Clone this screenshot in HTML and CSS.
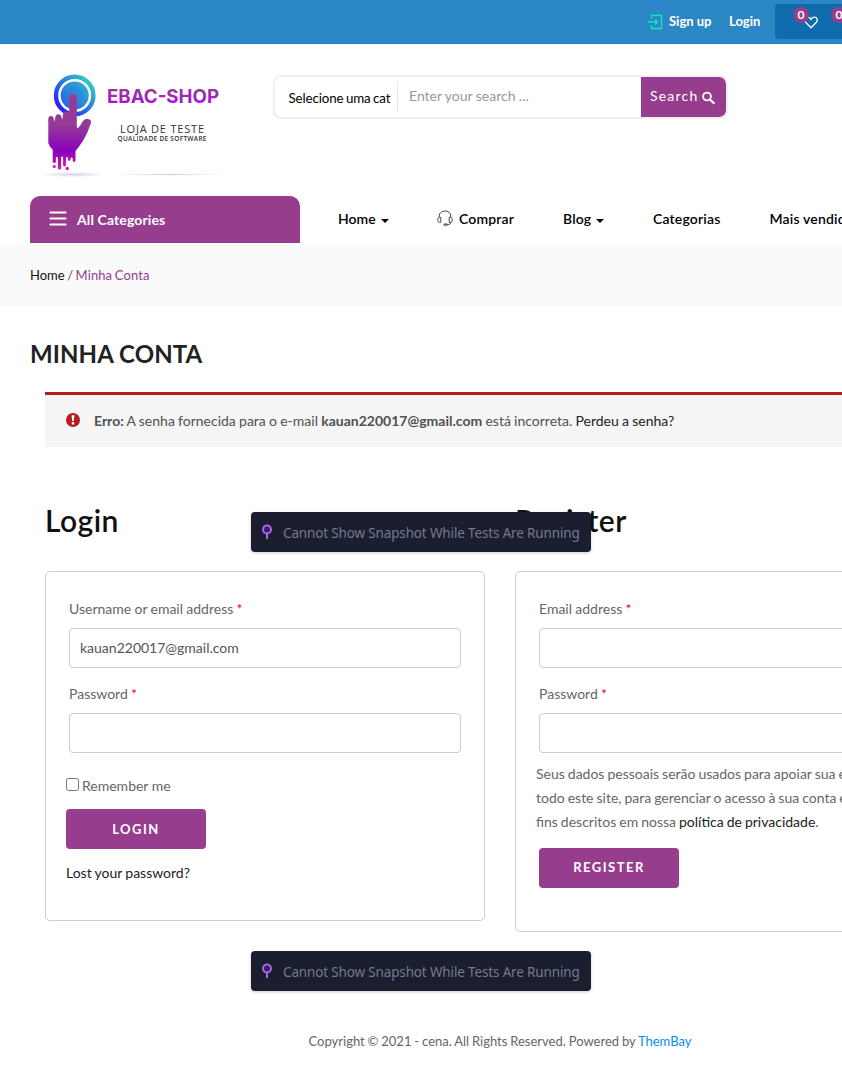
FILE: index.html
```html
<!DOCTYPE html>
<html lang="pt-BR">
<head>
<meta charset="utf-8">
<title>Minha Conta – EBAC-SHOP</title>
<link rel="stylesheet" href="styles.css">
</head>
<body>
<div class="viewport">
<div class="page">
  <div class="topbar">
    <a class="signup">
      <svg width="16" height="16" viewBox="0 0 16 16" fill="none" stroke="#14e6b8" stroke-width="1.300"><path d="M4.500 5V1.500h10v13h-10V11M0.500 8h10M8 5.500 10.500 8 8 10.500"/></svg>
      <span class="t-signup">Sign up</span>
    </a>
    <a class="t-login">Login</a>
    <div class="tools">
      <span class="badge badge-wish">0</span>
      <svg class="heart" width="14" height="13" viewBox="0 0 14 13" fill="none" stroke="#fff" stroke-width="1.300"><path d="M7 11.800 1.800 6.500C-.3 4.200 1 1.200 3.700 1.200 5.300 1.200 6.400 2.200 7 3.400 7.600 2.200 8.700 1.200 10.300 1.200c2.700 0 4 3 1.900 5.300Z"/></svg>
      <span class="badge badge-cart">0</span>
    </div>
  </div>

  <header class="header">
    <svg class="logo" width="210" height="130" viewBox="20 60 210 130">
      <defs>
        <linearGradient id="ring" x1="0" y1="1" x2="1" y2="0"><stop offset="0" stop-color="#2d00ff"/><stop offset=".5" stop-color="#2877e8"/><stop offset="1" stop-color="#38e0b8"/></linearGradient>
        <linearGradient id="disc" x1="0" y1="1" x2="1" y2="0"><stop offset="0" stop-color="#2858e8"/><stop offset="1" stop-color="#30b8cc"/></linearGradient>
        <linearGradient id="hand" x1="0" y1="94" x2="0" y2="170" gradientUnits="userSpaceOnUse"><stop offset="0" stop-color="#963d8e"/><stop offset=".4" stop-color="#963a96"/><stop offset=".75" stop-color="#8a00bd"/><stop offset="1" stop-color="#e016b4"/></linearGradient>
        <linearGradient id="word" x1="0" y1="88" x2="0" y2="104" gradientUnits="userSpaceOnUse"><stop offset="0" stop-color="#963d8e"/><stop offset="1" stop-color="#aa10e0"/></linearGradient>
        <radialGradient id="shade"><stop offset="0" stop-color="#8c8cc8" stop-opacity=".4"/><stop offset="1" stop-color="#8c8cc8" stop-opacity="0"/></radialGradient>
      </defs>
      <ellipse cx="73" cy="174.500" rx="33" ry="2.600" fill="url(#shade)"/>
      <ellipse cx="170" cy="174.500" rx="57" ry="1.200" fill="url(#shade)"/>
      <circle cx="74.700" cy="95.500" r="18.700" fill="#fff" stroke="url(#ring)" stroke-width="4.400"/>
      <circle cx="74.700" cy="95.500" r="14" fill="url(#disc)"/>
      <circle cx="75" cy="95.500" r="9" fill="#2888dc" opacity=".5"/>
      <path fill="url(#hand)" d="M48.300 143V119q0-3 2.600-3t2.900 3q.2 2 .7 2 .6 0 .6-2.500q.4-4.200 3.200-4.200t3.200 3q.2 2 .7 2 .5 0 .6-3.500.3-4.300 3.200-4.300t3.200 2.500V98q0-4 3.800-4t3.800 4V126.500q0 2.500 2 .8 1.500-1.500 3.200-4.800 2.500-4 5.800-3.600 4.600.6 2.800 5Q88 132 83.500 140 79 147 75.500 151V160.500a1.400 1.400 0 0 1-2.800 0V158.500a1.100 1.100 0 0 0-2.200 0V159.500a1.300 1.300 0 0 1-2.600 0V158a1 1 0 0 0-2 0V165a1.400 1.400 0 0 1-2.800 0V157.500a1 1 0 0 0-2 0V168a1.600 1.600 0 0 1-3.200 0V158a1 1 0 0 0-2 0V161.500a1.500 1.500 0 0 1-3.200 0V149.500Q49.500 147 48.300 143Z"/>
      <circle cx="54.300" cy="166.500" r="1.600" fill="#e016b4"/><circle cx="67.200" cy="168.500" r="1.700" fill="#e016b4"/>
      <text class="logo-name" x="107" y="102.500" textLength="112" lengthAdjust="spacingAndGlyphs" fill="url(#word)">EBAC-SHOP</text>
      <text class="logo-sub" x="120" y="132.800" textLength="84">LOJA DE TESTE</text>
      <text class="logo-tiny" x="117.500" y="140.800" textLength="89">QUALIDADE DE SOFTWARE</text>
    </svg>
    <div class="search">
      <div class="cat"><span class="t-cat">Selecione uma cat</span></div>
      <div class="query"><span class="t-query">Enter your search ...</span></div>
      <div class="go"><span class="t-go">Search</span>
        <svg width="14" height="14" viewBox="0 0 14 14" fill="none" stroke="#fff" stroke-width="1.800"><circle cx="5" cy="5.500" r="3.900"/><path d="m8 8.400 4.400 4.400" stroke-width="2.100"/></svg>
      </div>
    </div>
  </header>

  <nav class="nav">
    <div class="all">
      <svg width="18" height="16" viewBox="0 0 18 16" stroke="#fff" stroke-width="2.200" stroke-linecap="round"><path d="M1.500 1.500h15M1.500 7.500h15M1.500 13.500h15"/></svg>
      <span class="t-all">All Categories</span>
    </div>
    <div class="menu">
      <a class="m-home">Home<i class="caret"></i></a>
      <a class="m-shop"><svg width="16" height="16" viewBox="0 0 16 16" fill="none" stroke="#333" stroke-width=".9"><path d="M2.200 7V6C2.200 2.800 4.800 1 8 1s5.800 1.800 5.800 5v1M3.800 7.300v5H2.500C1 12.300.8 11.300.8 9.800S1 7.300 2.500 7.300ZM12.200 7.300v5h1.300c1.500 0 1.700-1 1.700-2.500s-.2-2.500-1.700-2.500ZM13.500 12.300c0 1.800-1 2.300-3 2.300M7 14h3.300v1.200H7Z"/></svg><span>Comprar</span></a>
      <a class="m-blog">Blog<i class="caret"></i></a>
      <a class="m-cat">Categorias</a>
      <a class="m-best">Mais vendidos</a>
    </div>
  </nav>

  <div class="crumbs"><span class="t-crumbs">Home <i>/</i> <b>Minha Conta</b></span></div>

  <main class="main">
    <h1><span>MINHA CONTA</span></h1>
    <div class="alert">
      <svg width="14" height="14" viewBox="0 0 14 14"><circle cx="7" cy="7" r="7" fill="#b81c23"/><path d="M5.600 2.200h2.800l-.5 5.700H6.100ZM5.800 9h2.400v2.400H5.800Z" fill="#fff"/></svg>
      <span class="t-alert"><b>Erro:</b> A senha fornecida para o e-mail <b class="mail">kauan220017@gmail.com</b> está incorreta. <a>Perdeu a senha?</a></span>
    </div>
    <div class="columns">
      <section>
        <h2>Login</h2>
        <div class="card card-login">
          <label><span>Username or email address <em>*</em></span></label>
          <div class="input"><span>kauan220017@gmail.com</span></div>
          <label><span>Password <em>*</em></span></label>
          <div class="input"></div>
          <div class="remember"><i class="box"></i><span>Remember me</span></div>
          <div class="btn"><span>LOGIN</span></div>
          <a class="lost"><span>Lost your password?</span></a>
        </div>
      </section>
      <section>
        <h2>Register</h2>
        <div class="card card-register">
          <label><span>Email address <em>*</em></span></label>
          <div class="input"></div>
          <label><span>Password <em>*</em></span></label>
          <div class="input"></div>
          <p class="privacy">Seus dados pessoais serão usados para apoiar sua experiência em<br>todo este site, para gerenciar o acesso à sua conta e para outros<br>fins descritos em nossa <a>política de privacidade</a>.</p>
          <div class="btn btn-register"><span>REGISTER</span></div>
        </div>
      </section>
    </div>
  </main>

  <footer class="footer"><span>Copyright © 2021 - cena. All Rights Reserved. Powered by <a>ThemBay</a></span></footer>
</div>

<div class="toast toast-top">
  <svg width="12" height="16" viewBox="0 0 12 16" fill="none" stroke="#a668e8" stroke-width="2"><path d="M6 9v6"/><circle cx="6" cy="5.500" r="4" fill="#3c1a70"/></svg>
  <span>Cannot Show Snapshot While Tests Are Running</span>
</div>
<div class="toast toast-bottom">
  <svg width="12" height="16" viewBox="0 0 12 16" fill="none" stroke="#a668e8" stroke-width="2"><path d="M6 9v6"/><circle cx="6" cy="5.500" r="4" fill="#3c1a70"/></svg>
  <span>Cannot Show Snapshot While Tests Are Running</span>
</div>
</div>
</body>
</html>
```

FILE: styles.css
```css
* { box-sizing: border-box; }
body { margin: 0; background: #fff; }
.viewport { position: relative; width: 842px; height: 1087px; overflow: hidden; }
.page {
  width: 1000px;
  font: 14px/24px Lato, "Liberation Sans", sans-serif;
  color: #666;
  white-space: nowrap;
}
svg { display: block; flex: none; }

.topbar {
  height: 44px;
  background: #2b87c5;
  border-bottom: 1px solid #2079b5;
  display: flex;
  padding: 0 0 0 647px;
  color: #fff;
  font-size: 13px;
  font-weight: 700;
}
.signup { display: flex; gap: 6px; width: 82px; padding-top: 9px; }
.signup svg { margin-top: 5px; }
.t-login { padding-top: 9px; width: 46px; }
.tools {
  position: relative;
  width: 195px;
  height: 35px;
  margin-top: 4px;
  border-radius: 4px;
  background: #0d6bae;
  padding: 12px 0 0 29px;
}
.badge {
  position: absolute;
  top: 3px;
  width: 16px;
  height: 16px;
  border-radius: 50%;
  background: #963d8e;
  font-size: 12px;
  line-height: 16px;
  text-align: center;
}
.badge-wish { left: 18px; }
.badge-cart { left: 56px; }

.header { height: 152px; display: flex; padding-left: 20px; }
.logo { margin-top: 16px; }
.logo-name { font: 700 19px Inter, sans-serif; }
.logo-sub { font: 11px "Open Sans", sans-serif; fill: #333; }
.logo-tiny { font: 600 6.500px "Open Sans", sans-serif; fill: #333; }
.search {
  margin: 31px 0 0 43px;
  width: 455px;
  height: 44px;
  border: 2px solid #efefef;
  border-radius: 8px;
  display: flex;
}
.cat { width: 123px; height: 30px; margin-top: 5px; border-right: 1px solid #e5e5e5; padding-left: 13.500px; color: #000; font-size: 13.330px; line-height: 33px; word-spacing: -.8px; letter-spacing: -.12px; }
.query { width: 243px; padding-left: 11px; line-height: 38px; color: #999; word-spacing: -.2px; }
.go { flex: 1; background: #963d8e; border-radius: 0 7px 7px 0; display: flex; padding-left: 9px; gap: 4px; color: #fff; line-height: 38px; letter-spacing: 1.200px; }
.go svg { margin-top: 14px; }

.nav { height: 48px; display: flex; padding-left: 30px; }
.all {
  width: 270px;
  height: 47px;
  background: #963d8e;
  border-radius: 10px 10px 0 0;
  display: flex;
  gap: 10px;
  padding: 15px 0 0 19px;
  color: #fff;
  font-weight: 700;
  letter-spacing: .12px;
}
.all span { line-height: 18px; }
.menu { display: flex; margin-left: 38px; padding-top: 11px; color: #000; font-weight: 600; letter-spacing: .17px; }
.m-home { width: 99px; letter-spacing: 0; }
.m-shop { width: 126px; display: flex; gap: 6px; }
.m-shop svg { margin-top: 3px; }
.m-blog { width: 90px; }
.m-cat { width: 116.500px; }
.caret { display: inline-block; border: 4px solid transparent; border-top-color: #000; border-bottom: 0; margin-left: 5px; vertical-align: 1px; }

.crumbs { height: 62px; background: #fafafa; padding: 19px 0 0 30px; font-size: 13px; color: #111; word-spacing: -.8px; }
.crumbs i { font-style: normal; color: #555; }
.crumbs b { font-weight: 400; color: #963d8e; letter-spacing: .1px; }

.main { padding: 0 30px; height: 685px; }
h1 { margin: 0; padding-top: 33px; height: 86px; font-size: 24px; line-height: 30px; font-weight: 700; color: #222; letter-spacing: .1px; }
.alert {
  height: 55px;
  margin: 0 15px;
  border-top: 3px solid #b81c23;
  background: #f5f5f5;
  display: flex;
  gap: 14px;
  padding: 14px 0 0 21px;
  color: #515151;
  word-spacing: -.35px;
}
.alert svg { margin-top: 4px; }
.alert a { color: #222; }
.columns { display: flex; gap: 30px; margin: 0 15px; padding-top: 55px; }
.columns section { width: 440px; }
h2 { margin: 0; height: 69px; line-height: 36px; font-size: 30px; font-weight: 600; color: #111; letter-spacing: .45px; }
.card { border: 1px solid #ccc; border-radius: 5px; padding: 25px 23px 0; }
.card-login { height: 350px; }
.card-register { height: 361px; }
.card label { display: block; height: 31px; word-spacing: -.3px; }
.card em { font-style: normal; color: #ff0018; }
.input { height: 40px; margin-bottom: 14px; border: 1px solid #ccc; border-radius: 4px; padding-left: 10px; line-height: 37px; color: #555; }
.remember { display: flex; gap: 3px; margin: 21px 0 11px -3px; }
.box { width: 13px; height: 13px; margin-top: 4px; border: 1px solid #767676; border-radius: 2.500px; background: #fff; }
.btn { width: 140px; height: 40px; margin-left: -3px; border-radius: 4px; background: #963d8e; color: #fff; font-size: 13px; font-weight: 700; line-height: 40px; letter-spacing: 1.500px; text-align: center; }
.btn-register { margin-left: 0; line-height: 39px; }
.lost { display: block; margin: 12px 0 0 -3px; color: #222; word-spacing: -.4px; }
.privacy { margin: -5px 0 14px -3px; word-spacing: -.6px; }
.privacy a { color: #222; }

.footer { padding-top: 38px; text-align: center; font-size: 13px; word-spacing: -.45px; }
.footer a { color: #0090f0; }

.toast {
  position: absolute;
  left: 251px;
  width: 340px;
  height: 40px;
  border-radius: 4px;
  background: #1b1e2e;
  box-shadow: 0 1px 3px rgba(0, 0, 0, .2);
  display: flex;
  gap: 10px;
  padding: 12px 0 0 10px;
  font: 13.500px/18px "Noto Sans", sans-serif;
  letter-spacing: -.15px;
  color: #747994;
  white-space: nowrap;
}
.toast-top { top: 512px; }
.toast-bottom { top: 951px; }
```
